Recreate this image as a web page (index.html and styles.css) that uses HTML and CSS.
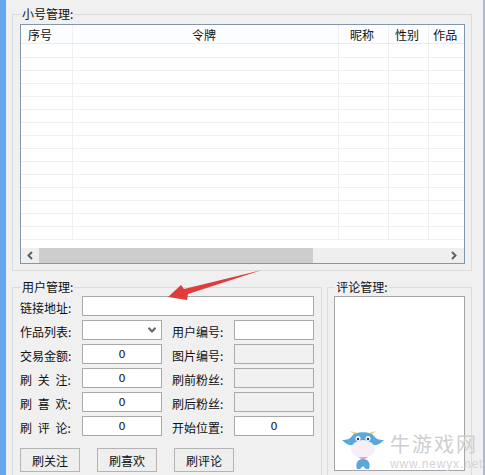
FILE: index.html
```html
<!DOCTYPE html>
<html lang="zh-CN">
<head>
  <meta charset="UTF-8">
  <title>小号管理</title>
  <link rel="stylesheet" href="styles.css">
</head>
<body>
  <div class="window">
    <fieldset class="group accounts">
      <legend>小号管理:</legend>
      <div class="grid">
        <table>
          <colgroup>
            <col class="c-no"><col class="c-token"><col class="c-nick"><col class="c-sex"><col class="c-work">
          </colgroup>
          <thead>
            <tr><th class="left">序号</th><th>令牌</th><th>昵称</th><th>性别</th><th>作品</th></tr>
          </thead>
          <tbody id="rows"></tbody>
        </table>
        <div class="scrollbar">
          <svg class="sb-arrow" width="19" height="15" viewBox="0 0 19 15"><path d="M11 4 L7.500 7.500 L11 11" fill="none" stroke="#606060" stroke-width="2"/></svg>
          <div class="thumb"></div>
          <svg class="sb-arrow" width="19" height="15" viewBox="0 0 19 15"><path d="M7 4 L10.500 7.500 L7 11" fill="none" stroke="#606060" stroke-width="2"/></svg>
        </div>
      </div>
    </fieldset>

    <div class="lower">
      <fieldset class="group users">
        <legend>用户管理:</legend>
        <div class="form">
          <label>链接地址:</label>
          <input class="span3" type="text">

          <label>作品列表:</label>
          <div class="select"><svg width="8" height="6" viewBox="0 0 8 6"><path d="M0.500 0.700 L4 4.500 L7.500 0.700" fill="none" stroke="#666" stroke-width="2"/></svg></div>
          <label class="right">用户编号:</label>
          <input type="text">

          <label>交易金额:</label>
          <input type="text" value="0">
          <label class="right">图片编号:</label>
          <input type="text" disabled>

          <label class="spaced">刷 关 注:</label>
          <input type="text" value="0">
          <label class="right">刷前粉丝:</label>
          <input type="text" disabled>

          <label class="spaced">刷 喜 欢:</label>
          <input type="text" value="0">
          <label class="right">刷后粉丝:</label>
          <input type="text" disabled>

          <label class="spaced">刷 评 论:</label>
          <input type="text" value="0">
          <label class="right">开始位置:</label>
          <input type="text" value="0">
        </div>
        <div class="buttons">
          <button>刷关注</button>
          <button>刷喜欢</button>
          <button>刷评论</button>
        </div>
      </fieldset>

      <fieldset class="group comments">
        <legend>评论管理:</legend>
        <div class="comment-box"></div>
      </fieldset>
    </div>
  </div>

  <svg class="red-arrow" width="100" height="34" viewBox="0 0 100 34">
    <path d="M1 30 L14 18 L17 22 L95 3 L21 27 L20 33 Z" fill="#e23b3b"/>
  </svg>

  <div class="watermark">
    <svg class="mascot" width="44" height="42" viewBox="0 0 44 42">
      <path d="M14 5 L9 1 L17 3 Z M30 5 L35 1 L27 3 Z" fill="#e3d28a"/>
      <path d="M1 10 C6 10 9 9 11 6 C15 1 29 1 33 6 C35 9 38 10 43 10 C38 15 34 16 31 15 L13 15 C10 16 6 15 1 10 Z" fill="#5aa7dc"/>
      <ellipse cx="22" cy="19" rx="12" ry="9" fill="#f8eef6"/>
      <circle cx="17" cy="8.500" r="2.500" fill="#fff"/>
      <circle cx="27" cy="8.500" r="2.500" fill="#fff"/>
      <circle cx="17" cy="9" r="1.200" fill="#334"/>
      <circle cx="27" cy="9" r="1.200" fill="#334"/>
      <path d="M17 27 L27 27 L22 30 Z" fill="#ef9fc0"/>
      <path d="M16 39 C14 33 17 29 22 29 C27 29 30 33 28 39 L25 39 L22 36 L19 39 Z" fill="#5aa7dc"/>
    </svg>
    <div class="wm-text">
      <div class="wm-name">牛游戏网</div>
      <div class="wm-url">www.newyx.net</div>
    </div>
  </div>

  <script>
    var rows = document.getElementById("rows");
    var html = "";
    for (var i = 0; i < 15; i++) {
      html += "<tr><td></td><td></td><td></td><td></td><td></td></tr>";
    }
    rows.innerHTML = html;
  </script>
</body>
</html>
```

FILE: styles.css
```css
* {
  box-sizing: border-box;
}
html, body {
  margin: 0;
  padding: 0;
  height: 475px;
  overflow: hidden;
}
body {
  position: relative;
  background: #f0f0f0;
  border-left: 6px solid #62a8ea;
  border-right: 2px solid #a9bdd0;
  color: #111;
  font-family: "Noto Sans CJK SC", "DejaVu Sans", sans-serif;
  font-size: 12px;
}
.window {
  padding: 7px 11px 0 6px;
}
.group {
  margin: 0;
  padding: 0;
  border: 1px solid #dcdcdc;
  min-width: 0;
}
.group legend {
  margin-left: 1px;
  padding: 0 1px;
  height: 14px;
  line-height: 14px;
  font-size: 12px;
}
.accounts {
  height: 264px;
  padding: 3px 6px 0 7px;
}
.grid {
  height: 240px;
  border: 1px solid #8497a8;
  background: #fff;
  display: flex;
  flex-direction: column;
  justify-content: space-between;
  overflow: hidden;
}
table {
  width: 100%;
  table-layout: fixed;
  border-collapse: collapse;
}
.c-no { width: 51px; }
.c-nick { width: 50px; }
.c-sex { width: 40px; }
.c-work { width: 36px; }
th {
  height: 18px;
  padding: 1px 2px 0 0;
  font-weight: normal;
  font-size: 12px;
  line-height: 17px;
  background: #fbfdff;
  border-right: 1px solid #f0f0f0;
  border-bottom: 1px solid #ececec;
}
th.left {
  text-align: left;
  padding-left: 7px;
}
td {
  height: 13px;
  padding: 0;
  border-right: 1px solid #f0f0f0;
  border-bottom: 1px solid #f0f0f0;
}
tbody tr:first-child td {
  height: 14px;
}
th:last-child, td:last-child {
  border-right: 0;
}
.scrollbar {
  height: 15px;
  flex: none;
  background: #efefef;
  display: flex;
  justify-content: space-between;
  position: relative;
}
.sb-arrow {
  flex: none;
}
.thumb {
  position: absolute;
  left: 18px;
  top: 0;
  width: 274px;
  height: 15px;
  background: #cdcdcd;
}
.lower {
  display: flex;
  gap: 5px;
  margin-top: 9px;
}
.users {
  width: 311px;
  height: 200px;
  padding: 2px 7px 0 7px;
}
.comments {
  width: 145px;
  height: 200px;
  padding: 2px 6px 0 6px;
}
.form {
  display: grid;
  grid-template-columns: 62px 80px 72px 80px;
  grid-auto-rows: 20px;
  row-gap: 4px;
  align-items: center;
}
.form label {
  align-self: start;
  line-height: 23px;
  white-space: pre;
  font-size: 12px;
}
.form label.spaced {
  word-spacing: 3px;
}
.form label.right {
  padding-left: 10px;
}
.span3 {
  grid-column: span 3;
}
.form input, .select {
  width: 100%;
  height: 20px;
  margin: 0;
  padding: 0;
  border: 1px solid #a9a9a9;
  background: #fff;
  text-align: center;
  font-family: "DejaVu Sans", sans-serif;
  font-size: 11px;
  color: #111;
  outline: 0;
  border-radius: 0;
}
.form input:disabled {
  background: #f0f0f0;
}
.select {
  display: flex;
  align-items: center;
  justify-content: flex-end;
  padding-right: 5px;
}
.buttons {
  display: flex;
  gap: 17px;
  margin-top: 12px;
}
.buttons button {
  width: 60px;
  height: 24px;
  padding: 0;
  background: #eeeeee;
  border: 1px solid #b4b4b4;
  font-family: "Noto Sans CJK SC", sans-serif;
  font-size: 12px;
  color: #111;
}
.comment-box {
  height: 175px;
  background: #fff;
  border: 1px solid #a5a5a5;
}
.red-arrow {
  position: absolute;
  left: 161px;
  top: 267px;
}
.watermark {
  position: absolute;
  left: 335px;
  top: 430px;
  display: flex;
  gap: 5px;
}
.mascot {
  flex: none;
}
.wm-text {
  width: 95px;
  padding-top: 1px;
}
.wm-name {
  font-size: 20px;
  line-height: 26px;
  letter-spacing: 2px;
  color: #cfcfcf;
  white-space: nowrap;
}
.wm-url {
  font-family: "Liberation Sans", sans-serif;
  font-size: 12px;
  line-height: 14px;
  letter-spacing: 0.8px;
  color: #d4d4d4;
  white-space: nowrap;
}
```
